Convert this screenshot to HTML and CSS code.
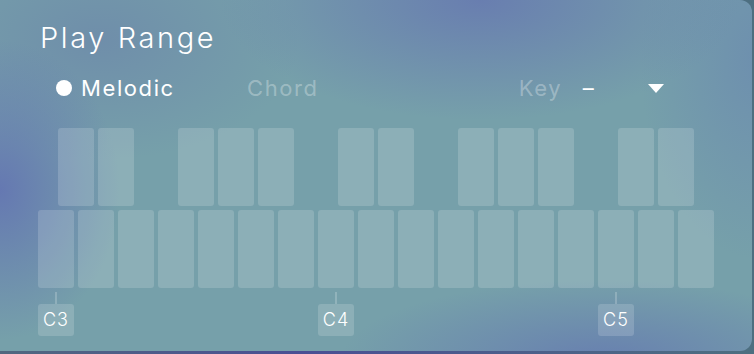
FILE: index.html
```
<!DOCTYPE html>
<html lang="en">
<head>
    <meta charset="UTF-8">
    <meta name="viewport" content="width=device-width, initial-scale=1.0">
    <title>Play Range</title>
    <link rel="stylesheet" href="styles.css">
</head>
<body>
    <div class="panel">
        <h1 class="title">Play Range</h1>

        <div class="modes">
            <div class="mode active"><span class="dot"></span>Melodic</div>
            <div class="mode">Chord</div>
            <div class="key-select">
                <span class="key-label">Key</span>
                <span class="key-value">–</span>
                <span class="arrow"></span>
            </div>
        </div>

        <div class="keyboard">
            <div class="black-row">
                <div class="key"></div>
                <div class="key"></div>
                <div class="key empty"></div>
                <div class="key"></div>
                <div class="key"></div>
                <div class="key"></div>
                <div class="key empty"></div>
                <div class="key"></div>
                <div class="key"></div>
                <div class="key empty"></div>
                <div class="key"></div>
                <div class="key"></div>
                <div class="key"></div>
                <div class="key empty"></div>
                <div class="key"></div>
                <div class="key"></div>
            </div>
            <div class="white-row">
                <div class="key"></div>
                <div class="key"></div>
                <div class="key"></div>
                <div class="key"></div>
                <div class="key"></div>
                <div class="key"></div>
                <div class="key"></div>
                <div class="key"></div>
                <div class="key"></div>
                <div class="key"></div>
                <div class="key"></div>
                <div class="key"></div>
                <div class="key"></div>
                <div class="key"></div>
                <div class="key"></div>
                <div class="key"></div>
                <div class="key"></div>
            </div>
            <div class="labels">
                <div class="octave c3"><span class="tick"></span><span class="tag">C3</span></div>
                <div class="octave c4"><span class="tick"></span><span class="tag">C4</span></div>
                <div class="octave c5"><span class="tick"></span><span class="tag">C5</span></div>
            </div>
        </div>
    </div>
</body>
</html>
```

FILE: styles.css
```
body {
    margin: 0;
    width: 754px;
    height: 354px;
    overflow: hidden;
    background: linear-gradient(90deg, #51687f 0%, #4a4f94 40%, #4d6f80 100%);
    font-family: Inter, "Noto Sans", sans-serif;
    font-weight: 300;
    color: #fff;
}
.panel {
    box-sizing: border-box;
    width: 752px;
    height: 351px;
    border-radius: 0 12px 12px 0;
    padding: 18px 0 0 38px;
    background:
        radial-gradient(ellipse 120px 150px at 0px 190px, rgba(100, 118, 178, 0.95), rgba(100, 118, 178, 0) 100%),
        radial-gradient(ellipse 260px 120px at 480px 0px, rgba(104, 124, 176, 0.95), rgba(104, 124, 176, 0) 100%),
        radial-gradient(ellipse 260px 80px at 600px 360px, rgba(102, 124, 176, 0.9), rgba(102, 124, 176, 0) 100%),
        radial-gradient(ellipse 120px 200px at 760px 60px, rgba(106, 136, 176, 0.7), rgba(106, 136, 176, 0) 100%),
        radial-gradient(ellipse 200px 120px at 100px 40px, rgba(104, 124, 170, 0.5), rgba(104, 124, 170, 0) 100%),
        #76a0aa;
}
.title {
    margin: 0 0 0 2px;
    font-size: 29px;
    font-weight: 300;
    line-height: 40px;
    letter-spacing: 2.6px;
}
.modes {
    display: flex;
    align-items: center;
    height: 28px;
    margin-top: 16px;
    font-size: 22px;
    font-weight: 400;
    letter-spacing: 1.6px;
}
.mode {
    display: flex;
    align-items: center;
    color: rgba(255, 255, 255, 0.3);
}
.mode.active {
    color: #fff;
    margin-left: 18px;
    width: 191px;
}
.dot {
    width: 16px;
    height: 16px;
    border-radius: 50%;
    background: #fff;
    margin-right: 9px;
}
.key-select {
    display: flex;
    align-items: center;
    margin-left: 200px;
}
.key-label {
    color: rgba(255, 255, 255, 0.3);
    width: 64px;
}
.key-value {
    width: 65px;
}
.arrow {
    width: 0;
    height: 0;
    border-left: 8px solid transparent;
    border-right: 8px solid transparent;
    border-top: 9px solid #fff;
}
.keyboard {
    margin-top: 26px;
}
.black-row,
.white-row,
.labels {
    display: grid;
    gap: 4px;
}
.black-row {
    grid-template-columns: repeat(16, 36px);
    padding-left: 20px;
    margin-bottom: 4px;
}
.white-row {
    grid-template-columns: repeat(17, 36px);
}
.labels {
    grid-template-columns: repeat(17, 36px);
    margin-top: 4px;
}
.key {
    height: 78px;
    border-radius: 3px;
    background: rgba(255, 255, 255, 0.16);
}
.key.empty {
    visibility: hidden;
}
.octave {
    display: flex;
    flex-direction: column;
    align-items: center;
}
.c3 { grid-column: 1; }
.c4 { grid-column: 8; }
.c5 { grid-column: 15; }
.tick {
    width: 2px;
    height: 12px;
    background: rgba(255, 255, 255, 0.2);
}
.tag {
    width: 36px;
    height: 32px;
    border-radius: 3px;
    background: rgba(255, 255, 255, 0.16);
    font-size: 18px;
    letter-spacing: 1px;
    line-height: 32px;
    text-align: center;
}
```
